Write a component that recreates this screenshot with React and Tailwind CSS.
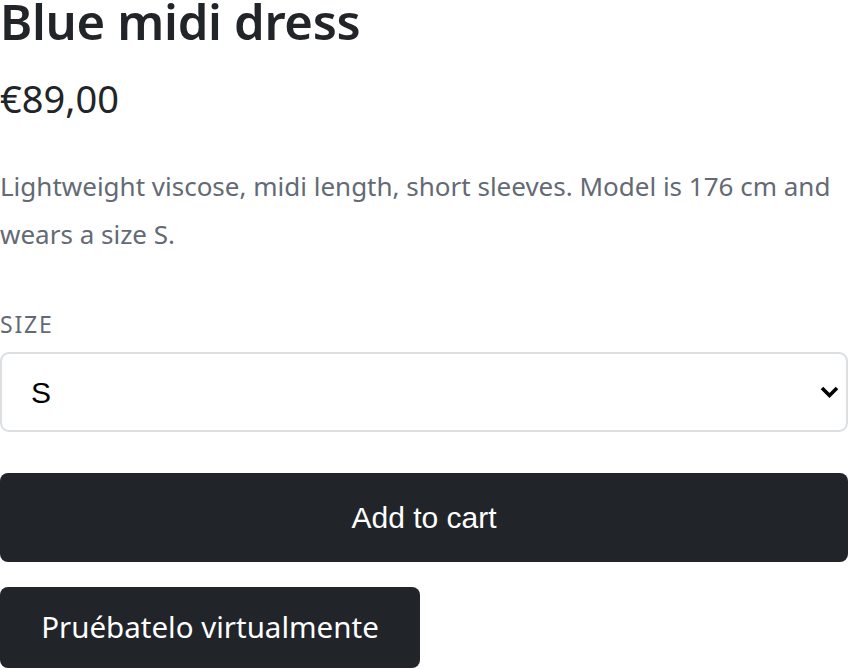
import React, { useState } from 'react'

export default function App() {
  const [size, setSize] = useState('S')

  return (
    <div className="min-h-screen bg-white text-[#212529] font-['Noto_Sans',sans-serif] overflow-hidden">
      <div className="w-[848px]">
        <h1 className="text-[49px] leading-[42px] font-semibold tracking-[-0.3px]">
          Blue midi dress
        </h1>
        <p className="mt-[37px] text-[38px] leading-[38px]">€89,00</p>

        <p className="mt-[45px] text-[26px] leading-[48px] text-[#636a74]">
          Lightweight viscose, midi length, short sleeves. Model is 176 cm and wears a size S.
        </p>

        <label className="block mt-[55px] text-[23px] leading-[23px] tracking-[0.08em] text-[#636a74]">
          SIZE
        </label>

        <div className="relative mt-[16px]">
          <select
            className="block w-full h-[80px] appearance-none rounded-[9px] border-2 border-[#dcdfe2] bg-white pl-[29px] pr-12 text-[30px] text-black font-['Liberation_Sans',Arial,sans-serif] outline-none"
            value={size}
            onChange={(e) => setSize(e.target.value)}
          >
            <option>XS</option>
            <option>S</option>
            <option>M</option>
            <option>L</option>
          </select>
          {/* chevron */}
          <svg
            className="pointer-events-none absolute right-[9px] top-[33px]"
            width="19"
            height="14"
            viewBox="0 0 19 14"
          >
            <path d="M2 3 L9.5 10.5 L17 3" fill="none" stroke="#000" strokeWidth="3.6" />
          </svg>
        </div>

        <button className="block mt-[41px] w-full h-[89px] rounded-[8px] bg-[#212529] text-white text-[30px] font-['Liberation_Sans',Arial,sans-serif]">
          Add to cart
        </button>

        <button className="block mt-[25px] w-[420px] h-[81px] rounded-[8px] bg-[#212529] text-white text-[29.5px]">
          Pruébatelo virtualmente
        </button>
      </div>
    </div>
  )
}
